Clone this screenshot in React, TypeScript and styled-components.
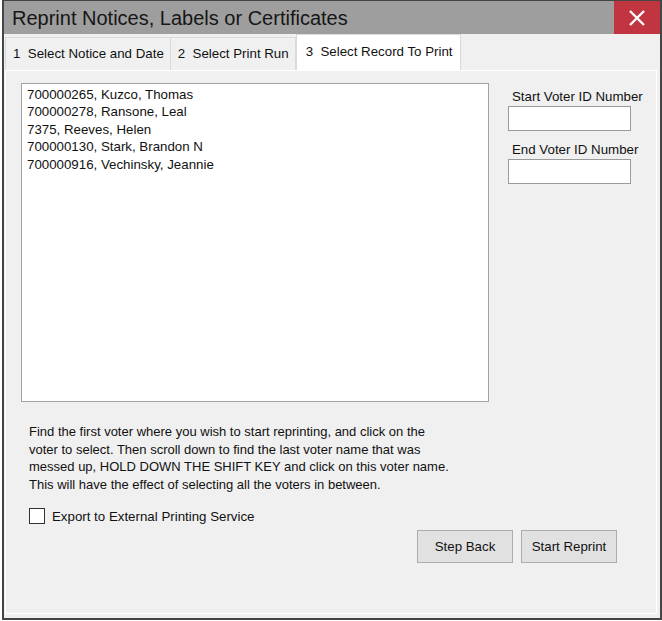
import React, { useState } from "react";
import styled, { createGlobalStyle } from "styled-components";

const voters = [
  "700000265, Kuzco, Thomas",
  "700000278, Ransone, Leal",
  "7375, Reeves, Helen",
  "700000130, Stark, Brandon N",
  "700000916, Vechinsky, Jeannie",
];

const tabs = ["1  Select Notice and Date", "2  Select Print Run", "3  Select Record To Print"];

export default function App() {
  const [active, setActive] = useState(2);
  const [exportIt, setExportIt] = useState(false);

  return (
    <>
      <Global />
      <Window>
        <TitleBar>
          <Title>Reprint Notices, Labels or Certificates</Title>
          <CloseButton aria-label="close">
            <svg width="18" height="18" viewBox="0 0 18 18">
              <path d="M2 2 L16 16 M16 2 L2 16" stroke="#fff" strokeWidth="2.4" />
            </svg>
          </CloseButton>
        </TitleBar>

        <TabStrip>
          {tabs.map((t, i) => (
            <Tab key={t} $active={i === active} onClick={() => setActive(i)}>
              {t}
            </Tab>
          ))}
        </TabStrip>

        <Panel>
          <TopRow>
            <ListBox>
              {voters.map((v) => (
                <ListItem key={v}>{v}</ListItem>
              ))}
            </ListBox>
            <SideColumn>
              <FieldLabel>Start Voter ID Number</FieldLabel>
              <TextBox />
              <FieldLabel $gap>End Voter ID Number</FieldLabel>
              <TextBox />
            </SideColumn>
          </TopRow>

          <Instructions>
            Find the first voter where you wish to start reprinting, and click on the
            <br />
            voter to select. Then scroll down to find the last voter name that was
            <br />
            messed up, HOLD DOWN THE SHIFT KEY and click on this voter name.
            <br />
            This will have the effect of selecting all the voters in between.
          </Instructions>

          <CheckRow onClick={() => setExportIt(!exportIt)}>
            <CheckBox>{exportIt ? "✓" : ""}</CheckBox>
            <span>Export to External Printing Service</span>
          </CheckRow>

          <ButtonRow>
            <Button>Step Back</Button>
            <Button>Start Reprint</Button>
          </ButtonRow>
        </Panel>
      </Window>
    </>
  );
}

const Global = createGlobalStyle`
  html, body {
    margin: 0;
    padding: 0;
    background: #ffffff;
  }
  body {
    font-family: "Liberation Sans", Arial, sans-serif;
    color: #000;
  }
`;

const Window = styled.div`
  box-sizing: border-box;
  width: 660px;
  height: 620px;
  margin-left: 2px;
  border: 2px solid #454545;
  border-top-width: 1px;
  background: #f0f0f0;
  display: flex;
  flex-direction: column;
`;

const TitleBar = styled.div`
  height: 33px;
  background: #9e9e9e;
  display: flex;
  align-items: center;
  justify-content: space-between;
`;

const Title = styled.div`
  font-size: 20px;
  color: #161616;
  padding-left: 8px;
  padding-top: 1px;
`;

const CloseButton = styled.button`
  width: 46px;
  height: 33px;
  border: none;
  padding: 0;
  background: #c13540;
  display: flex;
  align-items: center;
  justify-content: center;
  cursor: pointer;
`;

const TabStrip = styled.div`
  display: flex;
  align-items: flex-end;
  height: 36px;
  padding-left: 1px;
`;

const Tab = styled.div<{ $active?: boolean }>`
  box-sizing: border-box;
  height: ${(p) => (p.$active ? "36px" : "33px")};
  padding: ${(p) => (p.$active ? "0 7px 3px 9px" : "0 6px 1px 7px")};
  display: flex;
  align-items: center;
  font-size: 13.3px;
  white-space: pre;
  color: #111;
  background: ${(p) => (p.$active ? "#ffffff" : "#f0f0f0")};
  border: 1px solid #dadada;
  border-bottom: none;
  margin-left: ${(p) => (p.$active ? "0" : "-1px")};
  cursor: default;
  &:first-child {
    margin-left: 0;
  }
`;

const Panel = styled.div`
  box-sizing: border-box;
  margin: 0 3px 4px 1px;
  flex: 1;
  border: 1px solid #ffffff;
  background: #f0f0f0;
  padding: 12px 15px 0 15px;
  display: flex;
  flex-direction: column;
`;

const TopRow = styled.div`
  display: flex;
  gap: 19px;
`;

const ListBox = styled.div`
  box-sizing: border-box;
  flex: 0 0 468px;
  height: 319px;
  background: #ffffff;
  border: 1px solid #a3a3a3;
  padding: 2px 5px;
  font-size: 13.3px;
`;

const ListItem = styled.div`
  line-height: 17.4px;
  color: #111;
`;

const SideColumn = styled.div`
  display: flex;
  flex-direction: column;
  padding-top: 7px;
  min-width: 0;
`;

const FieldLabel = styled.div<{ $gap?: boolean }>`
  font-size: 13.3px;
  line-height: 14px;
  padding-left: 4px;
  margin-top: ${(p) => (p.$gap ? "12px" : "0")};
  margin-bottom: 2px;
  color: #111;
  white-space: nowrap;
`;

const TextBox = styled.input`
  box-sizing: border-box;
  width: 123px;
  height: 25px;
  border: 1px solid #9a9a9a;
  background: #fff;
  outline: none;
`;

const Instructions = styled.div`
  margin-top: 21px;
  padding-left: 8px;
  font-size: 13px;
  line-height: 17.5px;
  color: #111;
`;

const CheckRow = styled.label`
  display: flex;
  align-items: center;
  gap: 7px;
  margin-top: 15px;
  padding-left: 8px;
  font-size: 13.3px;
  color: #111;
  cursor: default;
`;

const CheckBox = styled.span`
  box-sizing: border-box;
  width: 16px;
  height: 16px;
  border: 1px solid #333;
  background: #fff;
  font-size: 12px;
  line-height: 14px;
  text-align: center;
`;

const ButtonRow = styled.div`
  display: flex;
  justify-content: flex-end;
  gap: 8px;
  margin-top: 6px;
  padding-right: 24px;
`;

const Button = styled.button`
  box-sizing: border-box;
  width: 96px;
  height: 33px;
  background: #e1e1e1;
  border: 1px solid #adadad;
  font-family: "Liberation Sans", Arial, sans-serif;
  font-size: 13.3px;
  color: #111;
  cursor: pointer;
`;
